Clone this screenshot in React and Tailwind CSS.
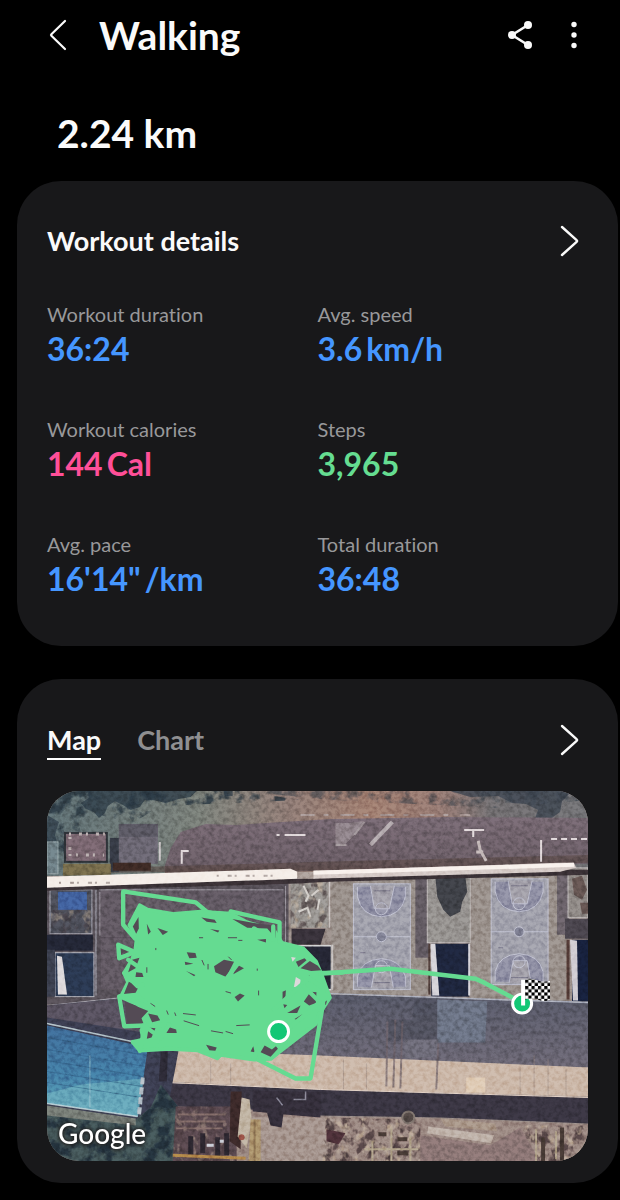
import React, { useState } from 'react';

const stats = [
  { label: 'Workout duration', value: '36:24', color: 'text-[#4596ff]' },
  { label: 'Avg. speed', value: '3.6', unit: 'km/h', color: 'text-[#4596ff]' },
  { label: 'Workout calories', value: '144', unit: 'Cal', color: 'text-[#ff4f98]' },
  { label: 'Steps', value: '3,965', color: 'text-[#65dd91]' },
  { label: 'Avg. pace', value: '16\'14"', unit: '/km', color: 'text-[#4596ff]' },
  { label: 'Total duration', value: '36:48', color: 'text-[#4596ff]' }
];

const ChevronRight = () => (
  <svg className="size-9" viewBox="0 0 36 36" fill="none" stroke="currentColor" strokeWidth="2.400" strokeLinecap="round" strokeLinejoin="round">
    <path d="M10 4 L24.600 17.200 Q25.600 18 24.600 18.800 L10 32" />
  </svg>
);

const Court = ({ x, y }) => (
  <g transform={`translate(${x} ${y})`} fill="none" stroke="#b9bacb" strokeWidth="1">
    <rect width="57" height="106" fill="#9797a3" />
    <path d="M4 3 V13 Q8 32 28 33 Q48 32 52 13 V3 M4 103 V93 Q8 76 28 75 Q48 76 52 93 V103" fill="#83839a" />
    <path d="M17 2 L21 25 H36 L41 2 M18 104 L22 82 H36 L40 104" fill="#9a97a1" />
    <circle cx="28" cy="25" r="6" />
    <circle cx="28" cy="83" r="6" />
    <path d="M0 53 H57" />
    <circle cx="28" cy="53" r="5" fill="#757689" />
    <path d="M20 7 H37 M20 99 H37 M7 69 H12" stroke="#696778" />
  </g>
);

// gaps left between the laps of the route
const routeGaps = [
  '520 290 550 270 580 276 557 322 524 308',
  '585 283 610 296 578 314',
  '438 248 464 250 468 264 446 266',
  '350 175 382 186 366 196',
  '276 170 293 142 294 176 286 192',
  '318 162 330 186 322 194',
  '235 232 252 244 236 258',
  '482 143 522 150 528 160 498 156',
  '508 178 536 182 532 188',
  '575 148 640 160 706 168 704 204 680 176 620 174',
  '432 276 458 282 434 286',
  '436 304 464 316 460 320',
  '286 308 304 310 308 322 284 322',
  '264 336 294 350 284 370 248 376',
  '274 270 296 264 284 296 262 308',
  '252 396 322 424 302 446 308 462 258 462',
  '322 432 350 438 358 452 334 458',
  '324 474 344 476 332 504 318 508',
  '376 470 406 480 408 490 366 490',
  '582 382 598 372 612 378 592 396',
  '790 396 810 366 828 368 826 400 806 408',
  '780 296 808 274 832 288 842 302 812 304',
  '766 276 792 266 798 272 774 292',
  '790 318 808 318 802 336',
  '740 430 780 408 770 430',
  '762 448 786 434 778 456',
  '496 526 528 534 524 544 506 542',
  '630 546 638 530 642 548',
  '660 548 672 528 694 540 706 530 712 538 690 562',
  '650 210 676 208 676 218',
  '850 400 860 392 856 406',
  '726 366 736 362 734 392 726 392',
  '728 404 740 406 732 416'
];

const SatelliteMap = () => (
  <svg className="block h-auto w-full" viewBox="46 791 542 371" role="img" aria-label="Satellite map with the walking route">
    <defs>
      <filter id="grain" x="0" y="0" width="100%" height="100%" colorInterpolationFilters="sRGB">
        <feTurbulence type="fractalNoise" baseFrequency="0.22" numOctaves="3" seed="7" />
        <feColorMatrix values="1.8 0 0 0 -0.15  1.8 0 0 0 -0.15  1.8 0 0 0 -0.15  0 0 0 0 1" />
      </filter>
      <filter id="leaves" x="0" y="0" width="100%" height="100%" colorInterpolationFilters="sRGB">
        <feTurbulence type="fractalNoise" baseFrequency="0.07" numOctaves="4" seed="11" />
        <feColorMatrix values="0 0 0 0 0.13  0 0 0 0 0.18  0 0 0 0 0.22  0 5 0 0 -2.3" result="n" />
        <feComposite in="n" in2="SourceGraphic" operator="in" />
      </filter>
      <filter id="rubble" x="0" y="0" width="100%" height="100%" colorInterpolationFilters="sRGB">
        <feTurbulence type="fractalNoise" baseFrequency="0.12 0.09" numOctaves="3" seed="23" result="t" />
        <feColorMatrix in="t" values="0 0 0 0 0.22  0 0 0 0 0.17  0 0 0 0 0.18  0 5 0 0 -2.4" result="dark" />
        <feColorMatrix in="t" values="0 0 0 0 0.74  0 0 0 0 0.66  0 0 0 0 0.57  5 0 0 0 -2.8" result="light" />
        <feMerge result="m">
          <feMergeNode in="dark" />
          <feMergeNode in="light" />
        </feMerge>
        <feComposite in="m" in2="SourceGraphic" operator="in" />
      </filter>
      <linearGradient id="hedge">
        <stop offset="0" stopColor="#56666a" />
        <stop offset="0.28" stopColor="#6f746e" />
        <stop offset="0.45" stopColor="#84716b" />
        <stop offset="0.6" stopColor="#977467" />
        <stop offset="0.72" stopColor="#8c7069" />
        <stop offset="0.82" stopColor="#686567" />
        <stop offset="1" stopColor="#68686b" />
      </linearGradient>
      <linearGradient id="pool" x1="0" y1="0" x2="0" y2="1">
        <stop offset="0" stopColor="#38608a" />
        <stop offset="0.55" stopColor="#3d739c" />
        <stop offset="1" stopColor="#5698b0" />
      </linearGradient>
      <linearGradient id="roof" x1="0" y1="0" x2="0.05" y2="1">
        <stop offset="0" stopColor="#4e505e" />
        <stop offset="1" stopColor="#625e6a" />
      </linearGradient>
      <linearGradient id="lot" x1="0" y1="0" x2="0" y2="1">
        <stop offset="0" stopColor="#6c5f68" />
        <stop offset="0.8" stopColor="#61555d" />
        <stop offset="1" stopColor="#584642" />
      </linearGradient>
      <pattern id="checks" width="6.400" height="6.400" x="525" y="980" patternUnits="userSpaceOnUse">
        <rect width="6.400" height="6.400" fill="#fff" />
        <path d="M0 0 H3.200 V3.200 H0 Z M3.200 3.200 H6.400 V6.400 H3.200 Z" fill="#000" />
      </pattern>
    </defs>

    {/* hedge and car park */}
    <rect x="46" y="791" width="542" height="371" fill="#8f827d" />
    <rect x="46" y="791" width="542" height="85" fill="url(#hedge)" />
    <path d="M46 791 H240 L300 800 L160 806 L130 824 L90 812 L70 850 L46 870 Z" filter="url(#leaves)" opacity="0.8" />
    <path d="M240 791 H588 V800 L500 808 L330 800 Z" filter="url(#leaves)" opacity="0.5" />
    <path d="M88 791 H196 L190 797 L178 799 L165 803 L152 800 L144 800 L139 807 L130 810 L122 805 L114 801 L107 806 L104 813 L98 818 L93 812 L85 809 L80 803 L88 798 Z" fill="#26333e" opacity="0.75" />
    <path d="M450 791 H572 L562 801 L560 812 L553 817 L546 824 L537 826 L535 818 L538 810 L526 804 L512 803 L498 796 L470 797 Z" fill="#333b46" opacity="0.75" />
    <path d="M46 815 L58 822 L54 835 L57 845 L46 850 Z M223 791 H232 V796 H224 Z" fill="#26333e" opacity="0.7" />
    <path d="M164 866 L170 848 L180 832 L205 824 L235 825 L330 819 L450 817 L588 818 V864 L320 871 L164 876 Z" fill="url(#lot)" />
    <path d="M320 862 L588 855 V863 L320 870 L110 873 V868 Z" fill="#4e403c" opacity="0.6" />
    <path d="M300 815 L470 815" stroke="#a08f8c" strokeWidth="2" strokeDasharray="14 9 5 12" />
    <path d="M335 823 H350 L363 821 L353 836 L345 844 H335 Z" fill="#85797f" />
    <path d="M392 822 L370 845" stroke="#aea4a8" strokeWidth="4" />
    <path d="M364 822 L354 835 M335 845 H346" stroke="#988d91" strokeWidth="2" />
    <path d="M284 835 H305 M464 830 H484 M473 830 V837 M181 864 V851 H188 M541 862 V840 M276 835 H279" fill="none" stroke="#ded5d7" strokeWidth="2" />
    <path d="M551 839 H588" stroke="#ded5d7" strokeWidth="2" strokeDasharray="6 4" />
    <path d="M478 841 L480 850 L486 861 M476 852 H483" stroke="#bdb1b1" strokeWidth="3" fill="none" />

    {/* sheds by the hedge */}
    <rect x="46" y="842" width="11" height="32" fill="#65757b" stroke="#8e9da0" />
    <rect x="64" y="833" width="42" height="29" fill="#705e67" stroke="#292d32" strokeWidth="2" />
    <path d="M68 834 H104 M69 837 V857 M75 855 H103" stroke="#b3a8a8" strokeWidth="3" strokeDasharray="2 8 3 4" />
    <rect x="109" y="838" width="9" height="34" fill="#323640" />
    <rect x="118" y="824" width="39" height="40" fill="#625e69" />
    <rect x="118" y="824" width="39" height="13" fill="#53515b" />
    <path d="M159 842 V861" stroke="#c6c1c3" strokeWidth="2" />
    <path d="M62 864 H110 V875 L62 876 Z" fill="#6d6345" />
    <path d="M112 863 H150 V871 H112 Z" fill="#392722" />

    {/* courtyard row */}
    <rect x="46" y="880" width="242" height="125" fill="#504a51" />
    <rect x="49" y="890" width="42" height="44" fill="#474953" stroke="#9b9aa4" strokeWidth="1" />
    <rect x="50" y="910" width="40" height="23" filter="url(#rubble)" opacity="0.4" />
    <rect x="57" y="892" width="29" height="18" fill="#3c5a96" />
    <rect x="46" y="935" width="46" height="16" fill="#202331" />
    <rect x="54" y="953" width="39" height="44" fill="#27344b" stroke="#a7a7b0" strokeWidth="1" />
    <path d="M56 956 L61 957 L66 995 H57 Z" fill="#dad6d8" />
    <rect x="46" y="950" width="8" height="47" fill="#373b49" />
    <rect x="100" y="890" width="183" height="100" fill="#5a525b" />
    <path d="M99 892 V936 M98 890 H283 M285 886 V945" stroke="#8f8992" strokeWidth="1" />
    <path d="M100 938 H283" stroke="#4d464f" />
    <path d="M95 890 V996" stroke="#77747d" strokeWidth="2" />
    <path d="M46 1006 L130 997 L290 994" stroke="#9a97a1" strokeWidth="1" fill="none" />
    <rect x="290" y="880" width="38" height="48" fill="#8f8b87" />
    <rect x="290" y="880" width="38" height="48" filter="url(#rubble)" opacity="0.6" />
    <path d="M303 886 L308 896 L305 902 M318 890 L311 896 M298 912 L307 908 L310 917 M319 899 L317 910" fill="none" stroke="#cfcac5" strokeWidth="2" />
    <path d="M291 929 H325 L320 945 H291 Z" fill="#342e36" />
    <rect x="290" y="946" width="41" height="44" fill="#222330" stroke="#ccc" strokeWidth="1.500" />
    <rect x="331" y="878" width="96" height="117" fill="#8e847e" />
    <path d="M329 878 V928 M332 945 V990" stroke="#c4bebc" strokeWidth="1.500" />
    <rect x="415" y="878" width="14" height="80" fill="#5b545b" />
    <rect x="427" y="874" width="43" height="69" fill="#8b8784" stroke="#b9b3b2" strokeWidth="1" />
    <path d="M435 877 L465 876 L467 892 L462 902 L460 912 L450 917 L443 910 L437 897 Z" fill="#3a3c42" />
    <rect x="431" y="944" width="38" height="53" fill="#1c2339" />
    <path d="M430 944 H435 L439 996 H432 Z M468 944 H470 V996 H468 Z" fill="#d2d0d6" />
    <path d="M429 944 V995" stroke="#493936" strokeWidth="2" />
    <rect x="471" y="873" width="97" height="128" fill="#8f857f" />
    <rect x="557" y="875" width="12" height="60" fill="#635b62" />
    <rect x="568" y="868" width="20" height="50" fill="#837d7a" stroke="#b9b3b2" strokeWidth="1" />
    <path d="M572 879 L582 876 L587 890 L582 900 L574 895 Z M580 903 H588 V914 H582 Z" fill="#5d4e4b" />
    <rect x="565" y="919" width="23" height="20" fill="#443f47" />
    <rect x="572" y="940" width="16" height="62" fill="#151e38" />
    <path d="M570 940 L577 941 L578 1001 H573 Z" fill="#cbc7ce" />
    <path d="M568 940 V1000" stroke="#4b3531" strokeWidth="3" />
    <Court x={353} y={884} />
    <Court x={491} y={879} />

    {/* white wall */}
    <path d="M46 884 L290 878 L330 876 L568 870 L588 870 V875 L330 882 L290 884 L46 891 Z" fill="#352d31" />
    <path d="M46 877 L290 869 L297 872 V879 L46 888 Z" fill="#f4ece6" />
    <path d="M297 872 H314 V879 H297 Z" fill="#a3958f" />
    <path d="M313 871 L560 863 L574 863 L576 868 L560 872 L313 879 Z" fill="#d2c6c2" />
    <path d="M313 873 L574 865" stroke="#f8f0eb" strokeWidth="4" />
    <path d="M58 883 H110 M216 876 H280" stroke="#a79a96" strokeWidth="2" strokeDasharray="2 9 4 3" />

    {/* long roof */}
    <path d="M46 1006 L130 998 L290 994 L588 1002 V1068 L320 1057 L160 1052 L46 1025 Z" fill="url(#roof)" />
    <path d="M46 1006 L160 996 L166 1030 L120 1034 L46 1022 Z" fill="#514b58" />
    <path d="M330 994 L588 1003" stroke="#a5a9b8" strokeWidth="1.500" />
    <path d="M414 999 L437 1000 V1042 H388 V1020 H412 Z" fill="#434450" opacity="0.6" />
    <path d="M437 1000 L487 1002 L485 1043 H437 Z" fill="#636a7a" />
    <path d="M404 1040 H438 V1058 L404 1059 Z" fill="#65636f" />
    <path d="M165 1050 L320 1056 L588 1068 V1097 L320 1090 L165 1082 Z" fill="#c6b09f" />
    <path d="M387 1022 L386 1087 M395 1020 L393 1088 M402 1022 L400 1089 M438 1044 L436 1090" stroke="#64595f" strokeWidth="2" opacity="0.7" />
    <path d="M210 1062 V1084 M230 1064 V1085 M343 1060 V1090 M366 1064 V1090 M520 1068 V1094 M534 1056 V1095 M548 1060 V1095 M566 1070 V1096" stroke="#8e7b73" opacity="0.5" />
    <rect x="466" y="1078" width="19" height="15" fill="#dcc6ae" />
    <path d="M165 1083 L320 1090 L588 1098 V1124 L440 1118 L320 1116 L245 1112 L165 1106 Z" fill="#35313d" />
    <path d="M165 1083 L320 1090 L588 1098" stroke="#e0cdbf" fill="none" />

    {/* pool roof */}
    <path d="M46 1018 L150 1034 L178 1050 L164 1125 L46 1120 Z" fill="#37394b" />
    <path d="M46 1026 L147 1048 L137 1117 L46 1104 Z" fill="url(#pool)" />
    <path d="M46 1094 L80 1085 L143 1079 L137 1117 L46 1104 Z" fill="#68a8b8" opacity="0.6" />
    <path d="M46 1038 L145 1056 M46 1050 L144 1067 M46 1061 L142 1077 M46 1072 L141 1087 M46 1083 L140 1098" stroke="#2d5577" fill="none" opacity="0.6" />
    <path d="M89 1056 V1108" stroke="#9cc3cf" fill="none" opacity="0.6" />
    <path d="M46 1104 L137 1117 M46 1024 L150 1046" stroke="#c5dadd" strokeWidth="1.500" fill="none" opacity="0.8" />
    <path d="M142 1078 L138 1117" stroke="#aeb9c2" strokeWidth="4" strokeDasharray="7 3" />
    <path d="M160 1052 L167 1052 L166 1082 H158 Z" fill="#292732" />

    {/* yards at the bottom */}
    <path d="M46 1108 L135 1120 L150 1108 L160 1085 L178 1108 L190 1125 L178 1162 H46 Z" fill="#3f5052" />
    <path d="M46 1108 L135 1120 L150 1108 L160 1085 L178 1108 L190 1125 L178 1162 H46 Z" filter="url(#leaves)" />
    <path d="M46 1106 L135 1119 V1126 L46 1116 Z" fill="#6d726c" />
    <path d="M250 1110 L320 1117 L440 1119 L588 1125 V1162 H230 V1112 Z" fill="#917d77" />
    <path d="M250 1118 H335 L328 1162 H262 Z" fill="#9c8a82" />
    <path d="M325 1118 L420 1120 V1162 H322 Z M525 1126 L588 1126 V1162 H515 Z" filter="url(#rubble)" opacity="0.75" />
    <path d="M175 1107 H236 V1162 H172 Z" fill="#54444a" />
    <path d="M175 1107 H236 V1162 H172 Z" filter="url(#rubble)" opacity="0.4" />
    <path d="M177 1115 H225 M175 1122 H225 M175 1129 H222" stroke="#77625f" strokeWidth="2" />
    <path d="M190 1137 V1156 M202 1134 V1154 M217 1138 V1158 M226 1134 V1156" stroke="#28232b" strokeWidth="5" />
    <path d="M206 1146 H213 M219 1142 H223" stroke="#c9ccd6" strokeWidth="3" />
    <path d="M230 1092 L241 1092 L240 1150 L229 1142 Z" fill="#372626" />
    <path d="M241 1098 L249 1100 L251 1120 L246 1149 L237 1137 Z" fill="#b9ab98" />
    <circle cx="241" cy="1138" r="3" fill="#8e4a40" />
    <path d="M250 1120 H260 V1162 H248 Z" fill="#a58b65" />
    <path d="M254 1120 V1162" stroke="#836a4c" strokeWidth="2" />
    <path d="M172 1156 L245 1159" stroke="#a87a42" strokeWidth="3" />
    <path d="M265 1108 L276 1100 L284 1106 L281 1128 L270 1126 Z M252 1091 L320 1093 V1118 L284 1115 L252 1112 Z" fill="#302b36" />
    <path d="M276 1098 L282 1106 M293 1100 H305 V1092" stroke="#7d7b8b" strokeWidth="1.500" fill="none" />
    <path d="M420 1136 L490 1146 L520 1128 L540 1162 H420 Z" fill="#806c6b" />
    <path d="M440 1119 L495 1124 L497 1132 L445 1127 Z" fill="#a08c7d" />
    <path d="M428 1127 L494 1136 L491 1144 L427 1134 Z" fill="#b9aba1" />
    <path d="M364 1150 H418 M372 1142 V1162 M391 1128 V1162 M410 1136 V1162 M536 1130 V1162 M556 1132 V1160" stroke="#a99a80" strokeWidth="2" fill="none" />
    <path d="M378 1135 H386 M397 1140 H407 M397 1154 H408 M543 1138 V1162 M562 1128 V1162" stroke="#413530" strokeWidth="4" />
    <path d="M326 1130 L345 1134 L338 1145 L326 1142 Z" fill="#472d34" />
    <circle cx="408" cy="1118" r="6" fill="#4b423f" stroke="#766c66" strokeWidth="2" />

    <rect x="46" y="791" width="542" height="371" filter="url(#grain)" opacity="0.18" className="mix-blend-overlay" />

    {/* route */}
    <g transform="translate(40 870) scale(0.33333)" stroke="#65db91" strokeLinejoin="round" strokeLinecap="round">
      <path
        strokeWidth="12"
        fill="#65db91"
        d="M297 107 L320 120 L400 133 L480 126 L570 132 L620 158 L700 182 L724 220 L788 236 L826 275 L845 320 L868 384 L838 430 L826 462 L715 548 L690 568 L640 570 L540 556 L530 566 L470 542 L385 538 L297 543 L276 518 L308 510 L302 482 L312 464 L296 440 L310 420 L290 404 L240 382 L262 338 L250 310 L274 270 L284 240 L288 205 L266 166 Z"
      />
      <g fill="#544b55" stroke="none">
        {routeGaps.map((points) => (
          <polygon key={points} points={points} />
        ))}
        <path d="M766 322 L780 330 L778 350 L760 352 Z M752 262 L766 264 L756 276 Z" fill="#dcd8da" />
      </g>
      <path
        strokeWidth="3"
        stroke="#544b55"
        d="M484 272 L490 286 M502 284 V298 M476 204 H486 M563 204 H588 M594 212 H604 M564 262 L572 270 M318 294 V308 M345 236 V240 M428 432 L464 436 M430 454 L474 468 M378 424 L382 434 M402 430 L405 438 M512 484 L546 490 M556 486 L576 492 M588 468 L626 466 M654 364 V376 M556 366 L570 370 M650 298 V302 M330 402 L342 410"
      />
      <g strokeWidth="13" fill="none">
        <path d="M282 206 L247 165 L247 65 L465 98 L500 127 L560 140" />
        <path d="M570 125 L717 158 V215 M640 176 L696 210 M698 170 V210" />
        <path d="M280 246 L232 225 L235 266 L290 244 M262 270 L290 290" />
        <path d="M250 310 L290 350 L306 346 M240 380 L286 376 L340 420" />
        <path d="M235 380 L250 470 L385 465 M250 384 L330 416" />
        <path d="M276 517 H350 M297 544 L312 470 L360 505 L385 465" />
        <path d="M560 324 L596 276 M700 420 L800 330 L770 300 L840 350" />
        <path d="M745 476 L838 398 L790 350 M640 566 L660 520" />
        <path d="M655 572 L765 627 H810 L848 400" />
        <path d="M846 310 L905 309" />
      </g>
    </g>
    <path d="M318 974 L390 969 L475 979 L484 983 L522 1003" fill="none" stroke="#65db91" strokeWidth="4.500" strokeLinejoin="round" />

    {/* start and finish */}
    <g fill="#12c775" stroke="#fff" strokeWidth="3">
      <circle cx="278" cy="1032" r="10" />
      <circle cx="522" cy="1004" r="9.500" />
    </g>
    <path d="M523 980 V1006" stroke="#fff" strokeWidth="4" />
    <path d="M525 980 Q532 978 538 981 Q545 983 550 981 V1000 Q544 1003 538 1000 Q532 998 525 1000 Z" fill="url(#checks)" />
  </svg>
);

const App = () => {
  const [tab, setTab] = useState('map');

  return (
    <div className="min-h-screen bg-black pb-4 pl-[17px] pr-[2px] font-['Lato',sans-serif] text-[#fafafa] [font-variant-ligatures:none]">
      <header className="flex h-[70px] items-center pl-6 pr-7">
        <button type="button" aria-label="Back">
          <svg className="size-9" viewBox="0 0 36 36" fill="none" stroke="currentColor" strokeWidth="2.200" strokeLinecap="round" strokeLinejoin="round">
            <path d="M24 4 L10.400 17.200 Q9.600 18 10.400 18.800 L24 32" />
          </svg>
        </button>
        <h1 className="ml-[22px] flex-1 text-[39px] font-bold leading-[48px]">Walking</h1>
        <button type="button" aria-label="Share" className="mr-[22px]">
          <svg className="size-8" viewBox="0 0 32 32" fill="currentColor">
            <path d="M24 6 L8 16 L24 26" fill="none" stroke="currentColor" strokeWidth="2.600" />
            <circle cx="24" cy="6" r="4" />
            <circle cx="8" cy="16" r="4" />
            <circle cx="24" cy="26" r="4" />
          </svg>
        </button>
        <button type="button" aria-label="More options">
          <svg className="size-8" viewBox="0 0 32 32" fill="currentColor">
            <circle cx="16" cy="5.500" r="2.700" />
            <circle cx="16" cy="16" r="2.700" />
            <circle cx="16" cy="26.500" r="2.700" />
          </svg>
        </button>
      </header>

      <p className="pb-6 pl-10 pt-[39px] text-[39px] font-bold leading-[48px]">2.24 km</p>

      <section className="rounded-[44px] bg-[#18181a] px-[30px] pb-[45px] pt-[42px]">
        <div className="flex items-center justify-between">
          <h2 className="text-[27px] font-bold leading-9">Workout details</h2>
          <button type="button" aria-label="Open workout details">
            <ChevronRight />
          </button>
        </div>
        <dl className="mt-[42px] grid grid-cols-2 gap-y-[45px]">
          {stats.map((s) => (
            <div key={s.label}>
              <dt className="text-[20px] leading-[26px] text-[#98989a]">{s.label}</dt>
              <dd className={`flex gap-1 text-[32px] font-bold leading-[44px] ${s.color}`}>
                <span>{s.value}</span>
                {s.unit && <span>{s.unit}</span>}
              </dd>
            </div>
          ))}
        </dl>
      </section>

      <section className="mt-[33px] rounded-[44px] bg-[#18181a] px-[30px] pb-[22px] pt-[41px]">
        <div className="flex items-center justify-between">
          <div role="tablist" className="flex gap-9 text-[27px] font-bold">
            <button
              type="button"
              role="tab"
              aria-selected={tab === 'map'}
              onClick={() => setTab('map')}
              className={`h-10 border-b-2 ${tab === 'map' ? 'border-white' : 'border-transparent text-[#8f8f91]'}`}
            >
              Map
            </button>
            <button
              type="button"
              role="tab"
              aria-selected={tab === 'chart'}
              onClick={() => setTab('chart')}
              className={`h-10 border-b-2 ${tab === 'chart' ? 'border-white' : 'border-transparent text-[#8f8f91]'}`}
            >
              Chart
            </button>
          </div>
          <button type="button" aria-label="Open map">
            <ChevronRight />
          </button>
        </div>
        <div className="relative isolate mt-[31px] overflow-hidden rounded-[32px]">
          <SatelliteMap />
          <span className="absolute bottom-2 left-[11px] text-[28px] font-medium leading-10 text-white [text-shadow:0_0_3px_#222,0_0_4px_#222,0_1px_4px_#222]">
            Google
          </span>
        </div>
      </section>
    </div>
  );
};

export default App;
